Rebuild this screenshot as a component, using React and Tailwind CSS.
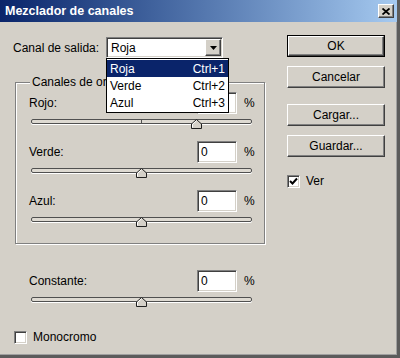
const font = { fontFamily: '"Liberation Sans", Arial, sans-serif' }

const channels = [
  { label: 'Rojo:', value: 100 },
  { label: 'Verde:', value: 0 },
  { label: 'Azul:', value: 0 },
]

const menuItems = [
  { name: 'Roja', key: 'Ctrl+1', active: true },
  { name: 'Verde', key: 'Ctrl+2' },
  { name: 'Azul', key: 'Ctrl+3' },
]

const sunken =
  'border border-t-[#808080] border-l-[#808080] border-b-white border-r-white shadow-[inset_1px_1px_0_#404040,inset_-1px_-1px_0_#d4d0c8]'
const raised =
  'border border-t-white border-l-white border-b-[#404040] border-r-[#404040] shadow-[inset_-1px_-1px_0_#808080]'

function Slider({ value }) {
  const pct = (value + 200) / 400
  return (
    <div className="relative ml-[2px] mt-[5px] h-[5px] w-[221px] rounded-[2px] border border-[#505050] bg-[#dedad2] shadow-[0_1px_0_#fff]">
      <div className="absolute left-[109px] top-0 h-[3px] w-px bg-[#505050]" />
      <svg
        className="absolute top-[-1px]"
        style={{ left: pct * 221 - 6.5 }}
        width="11"
        height="10"
        viewBox="0 0 11 10"
      >
        <path d="M5.5 0.5 L10.5 5 L10.5 9.5 L0.5 9.5 L0.5 5 Z" fill="#d4d0c8" stroke="#202020" />
        <path d="M1.5 5.3 L5.5 1.8 M1.5 5.3 L1.5 8.5" stroke="#fff" fill="none" />
      </svg>
    </div>
  )
}

function ValueRow({ label, value }) {
  return (
    <div>
      <div className="flex h-[22px] items-center">
        <span className="flex-1">{label}</span>
        <div className={`h-[22px] w-[40px] bg-white pl-[3px] leading-[20px] ${sunken}`}>0</div>
        <span className="w-[16px] pl-[7px]">%</span>
      </div>
      <Slider value={value} />
    </div>
  )
}

function Button({ children, primary }) {
  const inner = (
    <div className={`flex h-full w-full items-center justify-center bg-[#d4d0c8] ${raised}`}>
      {children}
    </div>
  )
  if (primary) {
    return <div className="h-[22px] w-[98px] border border-black">{inner}</div>
  }
  return <div className="h-[22px] w-[98px]">{inner}</div>
}

function Checkbox({ checked }) {
  return (
    <div className={`flex h-[13px] w-[13px] items-center justify-center bg-white ${sunken}`}>
      {checked && (
        <svg width="9" height="9" viewBox="0 0 9 9">
          <path d="M1 4 L3.5 6.5 L8 1.5" stroke="#000" strokeWidth="2" fill="none" />
        </svg>
      )}
    </div>
  )
}

export default function App() {
  return (
    <div
      className="flex h-[358px] w-[400px] flex-col overflow-hidden border-b-[3px] border-r-[3px] border-[#5c5c5c] bg-[#d4d0c8] text-[12px] text-black shadow-[inset_-1px_-1px_0_#a0a0a0]"
      style={font}
    >
      {/* title bar */}
      <div className="flex h-[22px] shrink-0 items-center justify-between bg-gradient-to-r from-[#0a246a] to-[#a6caf0] pl-[5px] pr-[3px]">
        <span className="text-[12.5px] font-bold text-white">Mezclador de canales</span>
        <div className={`flex h-[14px] w-[16px] items-center justify-center bg-[#d4d0c8] ${raised}`}>
          <svg width="8" height="7" viewBox="0 0 8 7">
            <path d="M0.5 0.5 L7.5 6.5 M7.5 0.5 L0.5 6.5" stroke="#000" strokeWidth="1.8" fill="none" />
          </svg>
        </div>
      </div>

      <div className="flex flex-1">
        {/* left column */}
        <div className="w-[272px] pl-[13px]">
          <div className="mt-[15px] flex h-[21px] items-center">
            <span className="w-[93px]">Canal de salida:</span>
            <div className="relative">
              <div className={`flex h-[21px] w-[117px] items-center bg-white ${sunken}`}>
                <span className="flex-1 pl-[4px]">Roja</span>
                <div className={`mr-[1px] flex h-[17px] w-[16px] items-center justify-center bg-[#d4d0c8] ${raised}`}>
                  <svg width="7" height="4" viewBox="0 0 7 4">
                    <path d="M0 0 L7 0 L3.5 4 Z" fill="#000" />
                  </svg>
                </div>
              </div>
              <div className="absolute left-0 top-[21px] z-10 w-[123px] border border-black bg-white py-[1px]">
                {menuItems.map((item) => (
                  <div
                    key={item.name}
                    className={`flex h-[17px] items-center justify-between px-[3px] ${
                      item.active ? 'bg-[#0a246a] text-white' : ''
                    }`}
                  >
                    <span>{item.name}</span>
                    <span>{item.key}</span>
                  </div>
                ))}
              </div>
            </div>
          </div>

          <div className="relative ml-[2px] mt-[24px] w-[250px] border border-[#808080] pb-[21px] pl-[13px] pr-[11px] pt-[9px] shadow-[inset_1px_1px_0_#fff,1px_1px_0_#fff]">
            <span className="absolute left-[14px] top-[-8px] bg-[#d4d0c8] px-[2px] leading-[14px]">
              Canales de origen
            </span>
            <div className="flex flex-col gap-[17px]">
              {channels.map((c) => (
                <ValueRow key={c.label} label={c.label} value={c.value} />
              ))}
            </div>
          </div>

          <div className="ml-[16px] mt-[26px] w-[224px]">
            <ValueRow label="Constante:" value={0} />
          </div>

          <div className="ml-px mt-[26px] flex items-center gap-[6px]">
            <Checkbox />
            <span>Monocromo</span>
          </div>
        </div>

        {/* right column */}
        <div className="ml-[15px] flex flex-col pt-[13px]">
          <Button primary>OK</Button>
          <div className="mt-[9px]">
            <Button>Cancelar</Button>
          </div>
          <div className="mt-[16px]">
            <Button>Cargar...</Button>
          </div>
          <div className="mt-[9px]">
            <Button>Guardar...</Button>
          </div>
          <div className="mt-[15px] flex items-center gap-[6px]">
            <Checkbox checked />
            <span>Ver</span>
          </div>
        </div>
      </div>
    </div>
  )
}
